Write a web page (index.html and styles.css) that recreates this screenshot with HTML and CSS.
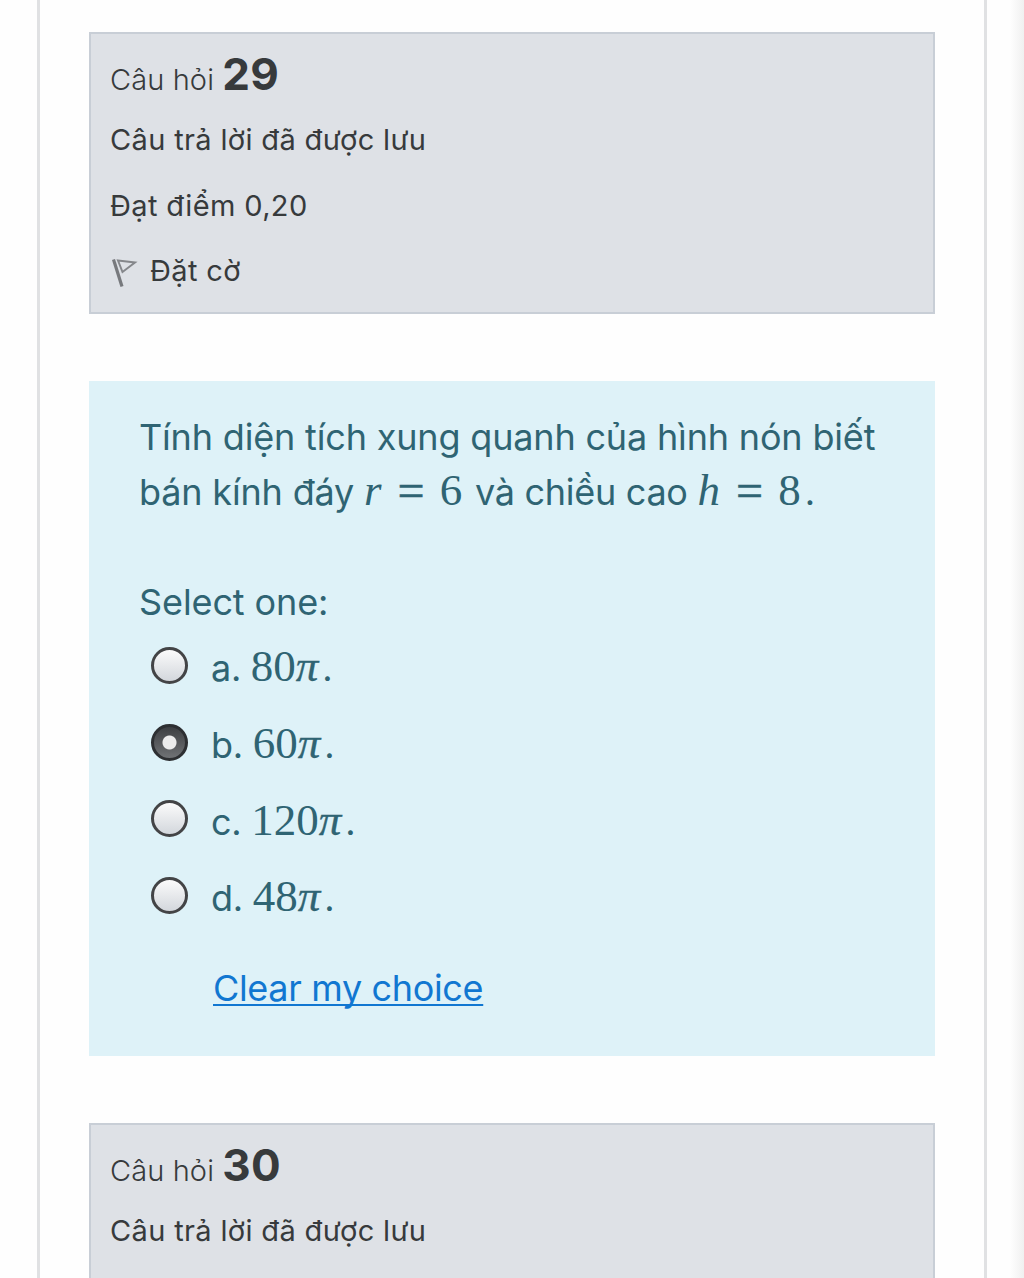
FILE: index.html
```html
<!DOCTYPE html>
<html lang="vi">
<head>
    <meta charset="UTF-8">
    <meta name="viewport" content="width=device-width, initial-scale=1.0">
    <title>Câu hỏi 29</title>
    <link rel="stylesheet" href="styles.css">
</head>
<body>
    <main class="page">
        <!-- Question 29 -->
        <section class="info">
            <h3 class="info-title">Câu hỏi <span class="number">29</span></h3>
            <div class="info-line">Câu trả lời đã được lưu</div>
            <div class="info-line">Đạt điểm 0,20</div>
            <div class="info-line flag">
                <svg class="flag-icon" width="28" height="32" viewBox="0 0 28 32">
                    <path d="M3.5 4.5L12 31.5" stroke="#77797d" stroke-width="3.2" fill="none"/>
                    <path d="M8 5.5L25 7.5L12.5 17Z" stroke="#85878b" stroke-width="2" fill="none"/>
                </svg>
                <span>Đặt cờ</span>
            </div>
        </section>

        <section class="formulation">
            <p class="question">Tính diện tích xung quanh của hình nón biết<br>
            bán kính đáy <span class="math"><i>r</i><span class="eq">=</span>6</span> <span class="after">và chiều cao</span> <span class="math"><i>h</i><span class="eq">=</span>8</span><span class="dot">.</span></p>

            <div class="prompt">Select one:</div>
            <div class="answers">
                <label class="answer">
                    <input type="radio" name="q29">
                    <span>a. <span class="math">80<i class="pi">π</i></span><span class="dot">.</span></span>
                </label>
                <label class="answer">
                    <input type="radio" name="q29" checked>
                    <span>b. <span class="math">60<i class="pi">π</i></span><span class="dot">.</span></span>
                </label>
                <label class="answer">
                    <input type="radio" name="q29">
                    <span>c. <span class="math">120<i class="pi">π</i></span><span class="dot">.</span></span>
                </label>
                <label class="answer">
                    <input type="radio" name="q29">
                    <span>d. <span class="math">48<i class="pi">π</i></span><span class="dot">.</span></span>
                </label>
            </div>
            <a class="clear" href="#">Clear my choice</a>
        </section>

        <!-- Question 30 -->
        <section class="info">
            <h3 class="info-title">Câu hỏi <span class="number">30</span></h3>
            <div class="info-line">Câu trả lời đã được lưu</div>
        </section>
    </main>
</body>
</html>
```
FILE: styles.css
```css
* {
    box-sizing: border-box;
}
body {
    margin: 0;
    height: 1278px;
    overflow: hidden;
    font-family: Inter, "Noto Sans", sans-serif;
    /* soft shade along the right edge */
    background: linear-gradient(to left, #f0f0f0, #fefefe 14px, #fefefe);
}
.page {
    width: 950px;
    height: 1278px;
    margin-left: 37px;
    padding: 32px 50px 0;
    overflow: hidden;
    background-color: #fefefe;
    border-left: 3px solid #e0e1e3;
    border-right: 3px solid #e0e1e3;
}
.info {
    width: 846px;
    height: 282px;
    margin-left: -1px;
    padding: 18px 19px;
    color: #373a3c;
    background-color: #dee1e6;
    border: 2px solid #c8ced6;
}
.info-title {
    margin: 0 0 1px;
    font-size: 29px;
    font-weight: 300;
    line-height: 52px;
    letter-spacing: 0.1px;
}
.number {
    font-size: 44px;
    font-weight: 700;
    line-height: 1;
    letter-spacing: 0.3px;
}
.info-line {
    font-size: 29px;
    line-height: 65.5px;
    letter-spacing: 0.35px;
    white-space: nowrap;
}
.flag {
    display: flex;
    align-items: center;
}
.flag-icon {
    margin-right: 12px;
}
.formulation {
    width: 846px;
    height: 675px;
    margin: 67px 0 67px -1px;
    padding: 29px 50px 0;
    color: #2f6473;
    background-color: #def2f8;
    font-size: 36px;
}
.question {
    margin: 0;
    line-height: 54.5px;
    letter-spacing: -0.17px;
    white-space: nowrap;
}
.math {
    font-family: "Liberation Serif", serif;
    font-size: 45px;
    line-height: 1;
    letter-spacing: 0;
}
.eq {
    margin: 0 15px 0 16px;
    font-size: 48px;
    line-height: 0;
    vertical-align: -2px;
    -webkit-text-stroke: 0.5px currentColor;
}
.after {
    margin-left: 3px;
    letter-spacing: -0.3px;
}
/* heavier stroke, as in the maths font */
.pi {
    -webkit-text-stroke: 0.3px currentColor;
}
.dot {
    margin-left: 4px;
}
.prompt {
    margin-top: 56px;
    line-height: 54px;
    letter-spacing: -0.1px;
}
.answers {
    padding: 0 0 0 12px;
    letter-spacing: -0.3px;
}
.answer {
    display: flex;
    align-items: center;
    height: 76.7px;
}
.answer input {
    appearance: none;
    width: 37px;
    height: 37px;
    margin: 0 23px 4px 0;
    border: 3px solid #434446;
    border-radius: 50%;
    background: linear-gradient(#fbfbfb, #d3d7dc);
}
.answer input:checked {
    border-color: #2d2f32;
    background: radial-gradient(circle, #ececec 6.5px, transparent 7.5px), linear-gradient(#3d3f42, #707275);
}
.clear {
    display: inline-block;
    margin: 25px 0 0 74px;
    color: #1177d1;
    line-height: 54px;
    letter-spacing: -0.34px;
    text-decoration-thickness: 2px;
    text-underline-offset: 3px;
    text-decoration-skip-ink: none;
}
```
